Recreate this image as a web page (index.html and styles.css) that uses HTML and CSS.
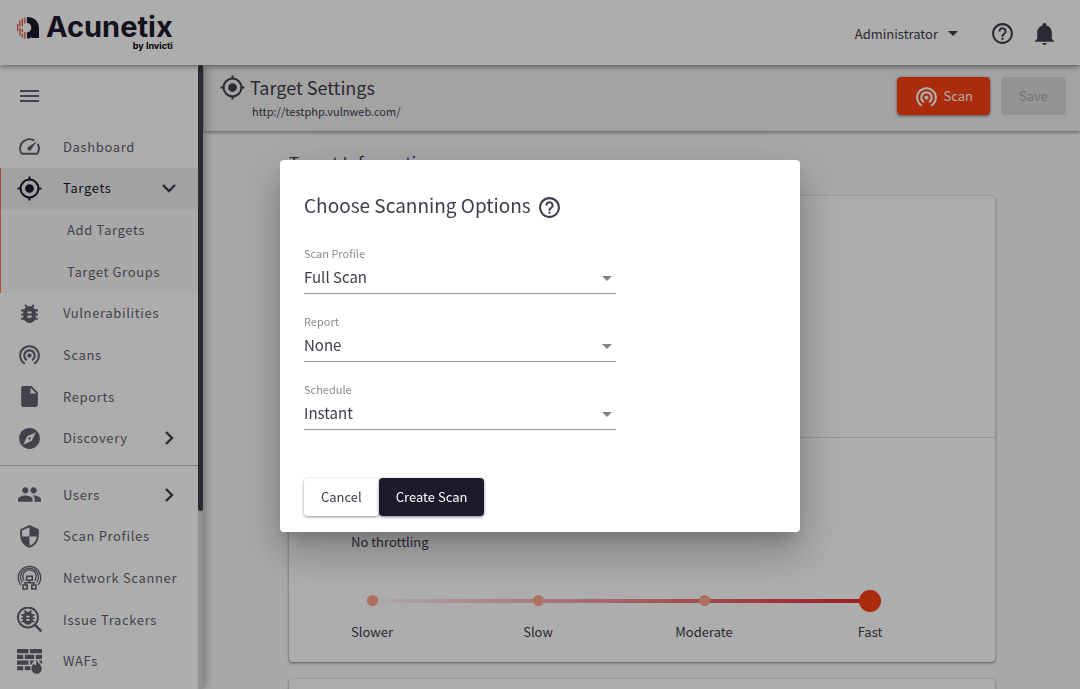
FILE: index.html
```html
<!DOCTYPE html>
<html lang="en">
<head>
<meta charset="utf-8">
<title>Acunetix - Target Settings</title>
<link rel="stylesheet" href="styles.css">
</head>
<body>
<svg class="symbols" aria-hidden="true">
  <symbol id="target" viewBox="0 0 24 24"><circle cx="12" cy="12" r="4.2" fill="currentColor"/><circle cx="12" cy="12" r="8.6" fill="none" stroke="currentColor" stroke-width="2"/><path d="M12 .5v3.5M12 20v3.5M.5 12H4M20 12h3.5" stroke="currentColor" stroke-width="2"/></symbol>
  <symbol id="help" viewBox="0 0 24 24"><path fill="currentColor" d="M11 18h2v-2h-2v2zm1-16C6.48 2 2 6.48 2 12s4.480 10 10 10 10-4.480 10-10S17.520 2 12 2zm0 18c-4.410 0-8-3.590-8-8s3.590-8 8-8 8 3.590 8 8-3.590 8-8 8zm0-14c-2.210 0-4 1.790-4 4h2c0-1.100.900-2 2-2s2 .900 2 2c0 2-3 1.750-3 5h2c0-2.250 3-2.500 3-5 0-2.210-1.790-4-4-4z"/></symbol>
  <symbol id="radar" viewBox="0 0 24 24"><path fill="currentColor" d="M12 11c-1.100 0-2 .900-2 2s.900 2 2 2 2-.900 2-2-.900-2-2-2zm6 2c0-3.310-2.690-6-6-6s-6 2.690-6 6c0 2.220 1.210 4.150 3 5.190l1-1.740c-1.190-.700-2-1.970-2-3.450 0-2.210 1.790-4 4-4s4 1.790 4 4c0 1.480-.810 2.750-2 3.450l1 1.740c1.790-1.040 3-2.970 3-5.190zM12 3C6.480 3 2 7.480 2 13c0 3.700 2.010 6.920 4.990 8.650l1-1.730C5.610 18.530 4 15.960 4 13c0-4.420 3.580-8 8-8s8 3.580 8 8c0 2.960-1.610 5.530-4 6.920l1 1.730c2.990-1.730 5-4.950 5-8.650 0-5.520-4.480-10-10-10z"/></symbol>
  <symbol id="bug" viewBox="0 0 24 24"><path fill="currentColor" d="M14,12H10V10H14M14,16H10V14H14M20,8H17.19C16.74,7.22 16.12,6.55 15.37,6.04L17,4.41L15.59,3L13.42,5.17C12.96,5.06 12.5,5 12,5C11.5,5 11.04,5.06 10.59,5.17L8.41,3L7,4.41L8.62,6.04C7.88,6.55 7.26,7.22 6.81,8H4V10H6.09C6.04,10.33 6,10.66 6,11V12H4V14H6V15C6,15.34 6.04,15.67 6.09,16H4V18H6.81C7.85,19.79 9.78,21 12,21C14.22,21 16.15,19.79 17.19,18H20V16H17.91C17.96,15.67 18,15.34 18,15V14H20V12H18V11C18,10.66 17.96,10.33 17.91,10H20V8Z"/></symbol>
  <symbol id="chevron-right" viewBox="0 0 24 24"><path d="M9 6l6 6-6 6" fill="none" stroke="currentColor" stroke-width="2.4"/></symbol>
  <symbol id="chevron-down" viewBox="0 0 24 24"><path d="M6 9l6 6 6-6" fill="none" stroke="currentColor" stroke-width="2.4"/></symbol>
</svg>

<div class="app">
  <header class="topbar">
    <a class="brand" href="#" aria-label="Acunetix by Invicti">
      <svg class="brand-mark" viewBox="0 0 22 22" aria-hidden="true">
        <path fill="#1c1a2b" d="M10 0C17 0 22 4.500 22 11v10h-7.300v-1c-1.200 1-2.700 1.500-4.700 1.500v-6c2.700 0 4.300-2 4.300-4.700S12.700 6 10 6z"/>
        <path stroke="#e4523a" stroke-width="1.300" d="M.700 7v7M3 3.500v6M3 11v7.500M5.300 1.500v8M5.300 12v3M5.300 16.500v4M7.900.400v6.200M7.900 15v6.500"/>
      </svg>
      <span class="brand-text"><span class="brand-name">Acunetix</span><span class="brand-by">by Invicti</span></span>
    </a>
    <div class="topbar-actions">
      <button class="account" type="button">Administrator <span class="caret"></span></button>
      <button class="icon-button" type="button" aria-label="Help"><svg class="icon"><use href="#help"/></svg></button>
      <button class="icon-button" type="button" aria-label="Notifications"><svg class="icon" viewBox="0 0 24 24"><path fill="currentColor" d="M21,19V20H3V19L5,17V11C5,7.9 7.03,5.17 10,4.29C10,4.19 10,4.1 10,4A2,2 0 0,1 12,2A2,2 0 0,1 14,4C14,4.1 14,4.19 14,4.29C16.97,5.17 19,7.9 19,11V17L21,19M14,21A2,2 0 0,1 12,23A2,2 0 0,1 10,21"/></svg></button>
    </div>
  </header>

  <div class="body">
    <nav class="sidebar" aria-label="Main">
      <div class="sidebar-content">
        <div class="menu-row"><button class="menu-button" type="button" aria-label="Toggle menu"><span></span><span></span><span></span></button></div>
        <ul class="nav-group nav-main">
          <li><a class="nav-link" href="#"><svg class="icon" viewBox="0 0 24 24"><path fill="currentColor" d="M20.380 8.570l-1.230 1.850a8 8 0 0 1-.220 7.580H5.070A8 8 0 0 1 15.580 6.850l1.850-1.230A10 10 0 0 0 3.350 19a2 2 0 0 0 1.720 1h13.850a2 2 0 0 0 1.740-1 10 10 0 0 0-.270-10.440zm-9.790 6.840a2 2 0 0 0 2.830 0l5.660-8.490-8.490 5.660a2 2 0 0 0 0 2.830z"/></svg>Dashboard</a></li>
          <li class="nav-open">
            <a class="nav-link nav-active" href="#"><svg class="icon"><use href="#target"/></svg>Targets<svg class="chevron"><use href="#chevron-down"/></svg></a>
            <a class="nav-link nav-sub" href="#">Add Targets</a>
            <a class="nav-link nav-sub" href="#">Target Groups</a>
          </li>
          <li><a class="nav-link" href="#"><svg class="icon"><use href="#bug"/></svg>Vulnerabilities</a></li>
          <li><a class="nav-link" href="#"><svg class="icon"><use href="#radar"/></svg>Scans</a></li>
          <li><a class="nav-link" href="#"><svg class="icon" viewBox="0 0 24 24"><path fill="currentColor" d="M6 2c-1.100 0-1.990.900-1.990 2L4 20c0 1.100.890 2 1.990 2H18c1.100 0 2-.900 2-2V8l-6-6H6zm7 7V3.500L18.500 9H13z"/></svg>Reports</a></li>
          <li><a class="nav-link" href="#"><svg class="icon" viewBox="0 0 24 24"><path fill="currentColor" d="M12 10.900c-.610 0-1.100.490-1.100 1.100s.490 1.100 1.100 1.100c.610 0 1.100-.490 1.100-1.100s-.490-1.100-1.100-1.100zM12 2C6.480 2 2 6.480 2 12s4.480 10 10 10 10-4.480 10-10S17.520 2 12 2zm2.190 12.190L6 18l3.810-8.190L18 6l-3.810 8.190z"/></svg>Discovery<svg class="chevron"><use href="#chevron-right"/></svg></a></li>
        </ul>
        <ul class="nav-group nav-secondary">
          <li><a class="nav-link" href="#"><svg class="icon" viewBox="0 0 24 24"><path fill="currentColor" d="M16 11c1.660 0 2.990-1.340 2.990-3S17.660 5 16 5c-1.660 0-3 1.340-3 3s1.340 3 3 3zm-8 0c1.660 0 2.990-1.340 2.990-3S9.660 5 8 5C6.340 5 5 6.340 5 8s1.340 3 3 3zm0 2c-2.330 0-7 1.170-7 3.500V19h14v-2.500c0-2.330-4.670-3.500-7-3.500zm8 0c-.290 0-.620.020-.970.050 1.160.840 1.970 1.970 1.970 3.450V19h6v-2.500c0-2.330-4.670-3.500-7-3.500z"/></svg>Users<svg class="chevron"><use href="#chevron-right"/></svg></a></li>
          <li><a class="nav-link" href="#"><svg class="icon" viewBox="0 0 24 24"><path fill="none" stroke="currentColor" stroke-width="1.800" d="M12 2L4 5.600V11c0 5 3.400 9.700 8 11 4.600-1.300 8-6 8-11V5.600z"/><path fill="currentColor" d="M12 2l8 3.600V12h-8zM4 12h8v10c-4.200-1.300-7.500-5.500-8-10z"/></svg>Scan Profiles</a></li>
          <li><a class="nav-link" href="#"><svg class="icon" viewBox="0 0 24 24"><g fill="none" stroke="currentColor" stroke-width="1.200"><path d="M3.800 19.200A10.800 10.800 0 1 1 20.200 19.200M5.300 17A8.600 8.600 0 1 1 18.700 17M7 15A6.400 6.400 0 1 1 17 15"/><path stroke-width="1.500" d="M9.300 10.800h5.400v3.800H9.300zM12 14.600V17M7.800 19v-2h8.400v2M5.800 19.200h4v3.800h-4zM14.200 19.200h4v3.800h-4z"/></g></svg>Network Scanner</a></li>
          <li><a class="nav-link" href="#"><svg class="icon" viewBox="0 0 24 24"><circle cx="10.500" cy="10" r="9.600" fill="none" stroke="currentColor" stroke-width="1.900"/><path d="M17 17l6.500 6.500" stroke="currentColor" stroke-width="2.400"/><use href="#bug" x="1" y=".500" width="19" height="19"/></svg>Issue Trackers</a></li>
          <li><a class="nav-link" href="#"><svg class="icon" viewBox="0 0 24 24"><path fill="currentColor" d="M0 0h11v4H0zM12.500 0H24v4H12.500zM0 5.500h6v4H0zM7.500 5.500h9v4h-9zM18 5.500h6v4h-6zM0 11h11v4H0zM12.500 11h4l-3 4h-1zM0 16.500h6v4H0zM7.500 16.500h5.300v4H7.500zM21 11h3v4z"/><path fill="currentColor" d="M19 9.500c0 3 4.800 5.500 4.800 9.300a5 5 0 0 1-10 0c0-2.700 1.500-4.300 2.500-5 .100 1.200.700 1.700 1.200 1.700 1.500 0 .500-3.500 1.500-6z"/></svg>WAFs</a></li>
        </ul>
      </div>
      <div class="scroll-track" aria-hidden="true"><div class="scroll-thumb"></div></div>
    </nav>

    <div class="page">
      <div class="page-header">
        <svg class="icon"><use href="#target"/></svg>
        <div class="page-title"><h1>Target Settings</h1><span>http://testphp.vulnweb.com/</span></div>
        <button class="button button-scan" type="button"><svg class="icon"><use href="#radar"/></svg>Scan</button>
        <button class="button button-save" type="button" disabled>Save</button>
      </div>
      <main class="content">
        <h2>Target Information</h2>
        <section class="card">
          <div class="card-info"></div>
          <div class="card-speed">
            <p>No throttling</p>
            <div class="speed">
              <div class="speed-track">
                <div class="speed-ticks"><i></i><i></i><i></i><i></i></div>
                <input type="range" min="0" max="3" value="3" aria-label="Scan speed">
              </div>
              <div class="speed-labels"><span>Slower</span><span>Slow</span><span>Moderate</span><span>Fast</span></div>
            </div>
          </div>
        </section>
        <section class="card card-next"></section>
      </main>
    </div>
  </div>
</div>

<div class="overlay">
  <form class="dialog" role="dialog" aria-labelledby="dialog-title">
    <div class="dialog-title"><h2 id="dialog-title">Choose Scanning Options</h2><button class="icon-button" type="button" aria-label="About scanning options"><svg class="icon"><use href="#help"/></svg></button></div>
    <div class="fields">
      <div class="field"><label for="profile">Scan Profile</label><select id="profile"><option>Full Scan</option></select></div>
      <div class="field"><label for="report">Report</label><select id="report"><option>None</option></select></div>
      <div class="field"><label for="schedule">Schedule</label><select id="schedule"><option>Instant</option></select></div>
    </div>
    <div class="dialog-actions"><button class="button button-cancel" type="button">Cancel</button><button class="button button-create" type="button">Create Scan</button></div>
  </form>
</div>
</body>
</html>
```
FILE: styles.css
```css
* { box-sizing: border-box; }

body {
  margin: 0;
  font: 13px/20px "Noto Sans CJK SC", "Noto Sans", sans-serif;
  color: #3f3e4a;
  background: #fafafa;
}

h1, h2, p, ul { margin: 0; padding: 0; font-weight: 400; }
ul { list-style: none; }
a { color: inherit; text-decoration: none; }
button, select { font: inherit; color: inherit; border: 0; background: none; padding: 0; }
.symbols { display: none; }
.icon { width: 25px; height: 25px; flex: none; display: block; }

.app { height: 100vh; display: flex; flex-direction: column; overflow: hidden; }

/* Top bar */
.topbar {
  display: flex;
  flex: none;
  align-items: center;
  justify-content: space-between;
  height: 65px;
  padding: 0 23px 0 17px;
  background: #fff;
  box-shadow: 0 1px 6px rgba(0, 0, 0, .5);
  z-index: 3;
}
.brand { display: flex; align-items: flex-start; gap: 7px; color: #1c1a2b; font-family: Inter, sans-serif; font-weight: 700; }
.brand-mark { width: 22px; height: 22px; margin-top: 3px; }
.brand-text { display: flex; flex-direction: column; align-items: flex-end; }
.brand-name { font-size: 29px; line-height: 26px; }
.brand-by { font-size: 9px; line-height: 12px; color: #000; }
.topbar-actions { display: flex; align-items: center; padding-top: 2px; }
.account { display: flex; align-items: center; gap: 10px; margin-right: 32px; }
.caret { border: 5px solid transparent; border-top-color: currentColor; border-bottom: 0; }
.icon-button { display: block; color: #3f3e4a; }
.icon-button + .icon-button { margin-left: 17px; }

.body { display: flex; flex: 1; min-height: 0; }

/* Sidebar */
.sidebar { display: flex; flex: none; width: 203px; background: #fff; box-shadow: 1px 0 10px rgba(0, 0, 0, .4); z-index: 2; }
.sidebar-content { flex: 1; overflow: hidden; }
.scroll-track { width: 5px; background: #d4d4d4; }
.scroll-thumb { height: 446px; border-radius: 3px; background: #3f3e4a; }
.menu-row { display: flex; align-items: center; height: 61px; padding-left: 20px; }
.menu-button { display: flex; flex-direction: column; gap: 3px; width: 19px; }
.menu-button span { height: 2px; background: #63626d; }
.nav-group { display: grid; grid-auto-rows: 1fr; }
.nav-main { min-height: 333px; }
.nav-secondary { min-height: 208px; margin-top: 6px; padding-top: 8px; border-top: 1px solid #bbb; box-sizing: content-box; }
.nav-group li { display: grid; grid-auto-rows: 1fr; }
.nav-open { grid-row: span 3; background: #f9f9f9; box-shadow: inset 1px 0 #ff7355; }
.nav-link { display: flex; align-items: center; gap: 21px; padding: 0 17px; letter-spacing: .05em; white-space: nowrap; color: #63626d; }
.nav-active { color: #1c1a2b; background: rgba(0, 0, 0, .04); }
.nav-sub { padding-left: 67px; }
.chevron { width: 24px; height: 24px; flex: none; margin-left: auto; color: #3f3e4a; }

/* Page */
.page { flex: 1; min-width: 0; margin-left: 1px; }
.page-header {
  display: flex;
  align-items: flex-start;
  height: 66px;
  padding: 12px 14px 0 16px;
  background: #f0f0f0;
  box-shadow: 0 1px 4px rgba(0, 0, 0, .5);
}
.page-header > .icon { margin-top: -2px; }
.page-title { flex: 1; padding-left: 5px; }
.page-title h1 { font-size: 18px; line-height: 20px; }
.page-title span { display: block; padding-left: 2px; font-size: 11px; line-height: 28px; }
.button { height: 38px; padding: 0 17px; border-radius: 4px; }
.button-scan { display: flex; align-items: center; gap: 5px; color: #fff; background: #fb4113; box-shadow: 0 1px 3px rgba(0, 0, 0, .5); }
.button-save { margin-left: 11px; padding: 0 18px; color: #aaa; background: #dadada; }

.content { max-width: 706px; margin: 0 auto; padding-top: 20px; }
.content h2 { height: 45px; font-size: 17px; line-height: 24px; }
.card { border-radius: 4px; background: #fff; box-shadow: 0 1px 3px rgba(0, 0, 0, .5); }
.card-info { min-height: 242px; border-bottom: 1px solid #ddd; }
.card-speed { padding: 94px 0 20px; }
.card-speed p { padding-left: 62px; }
.speed { padding: 38px 42px 0 0; }
.speed-track { display: grid; align-items: center; height: 21px; }
.speed-track > * { grid-area: 1 / 1; }
.speed-ticks, .speed-labels { display: grid; grid-template-columns: repeat(4, 1fr); justify-items: center; }
.speed-ticks { z-index: 1; }
.speed-ticks i { width: 11px; height: 11px; border-radius: 50%; background: #ffa68f; }
.speed-ticks i:last-child { visibility: hidden; }
.speed-track input {
  appearance: none;
  width: calc(75% + 22px);
  height: 4px;
  margin: 0 0 0 calc(12.5% - 11px);
  background: linear-gradient(to right, #e8202d00, #e8202d);
}
.speed-track input::-webkit-slider-thumb { appearance: none; width: 22px; height: 22px; border-radius: 50%; background: #fb4113; }
.speed-labels { padding-top: 11px; }
.card-next { height: 80px; margin-top: 17px; }

/* Dialog */
.overlay { position: fixed; inset: 0; z-index: 10; display: flex; align-items: center; justify-content: center; padding-top: 3px; background: rgba(0, 0, 0, .32); }
.dialog {
  width: 520px;
  max-width: 90%;
  padding: 32px 24px 16px;
  border-radius: 4px;
  background: #fff;
  box-shadow: 0 11px 15px -7px rgba(0, 0, 0, .2), 0 24px 38px 3px rgba(0, 0, 0, .14), 0 9px 46px 8px rgba(0, 0, 0, .12);
}
.dialog-title { display: flex; align-items: flex-start; gap: 6px; }
.dialog-title h2 { font-size: 19px; line-height: 26px; }
.dialog-title .icon-button { padding-top: 3px; }
.fields { display: flex; flex-direction: column; gap: 17px; max-width: 312px; padding: 23px 0 48px; }
.field { position: relative; }
.field::after {
  content: "";
  position: absolute;
  right: 4px;
  bottom: 13px;
  border: 5px solid transparent;
  border-top-color: #85848c;
  border-bottom: 0;
  pointer-events: none;
}
.field label { display: block; font-size: 11px; line-height: 20px; color: #8c8b93; }
.field select {
  appearance: none;
  display: block;
  width: 100%;
  height: 31px;
  padding-bottom: 2px;
  border-bottom: 1px solid #949494;
  border-radius: 0;
  font-size: 15px;
}
.dialog-actions { display: flex; }
.button-cancel { background: #fff; box-shadow: 0 1px 3px rgba(0, 0, 0, .45); }
.button-create { color: #fff; background: #1c1a2b; box-shadow: 0 1px 3px rgba(0, 0, 0, .5); }
```
